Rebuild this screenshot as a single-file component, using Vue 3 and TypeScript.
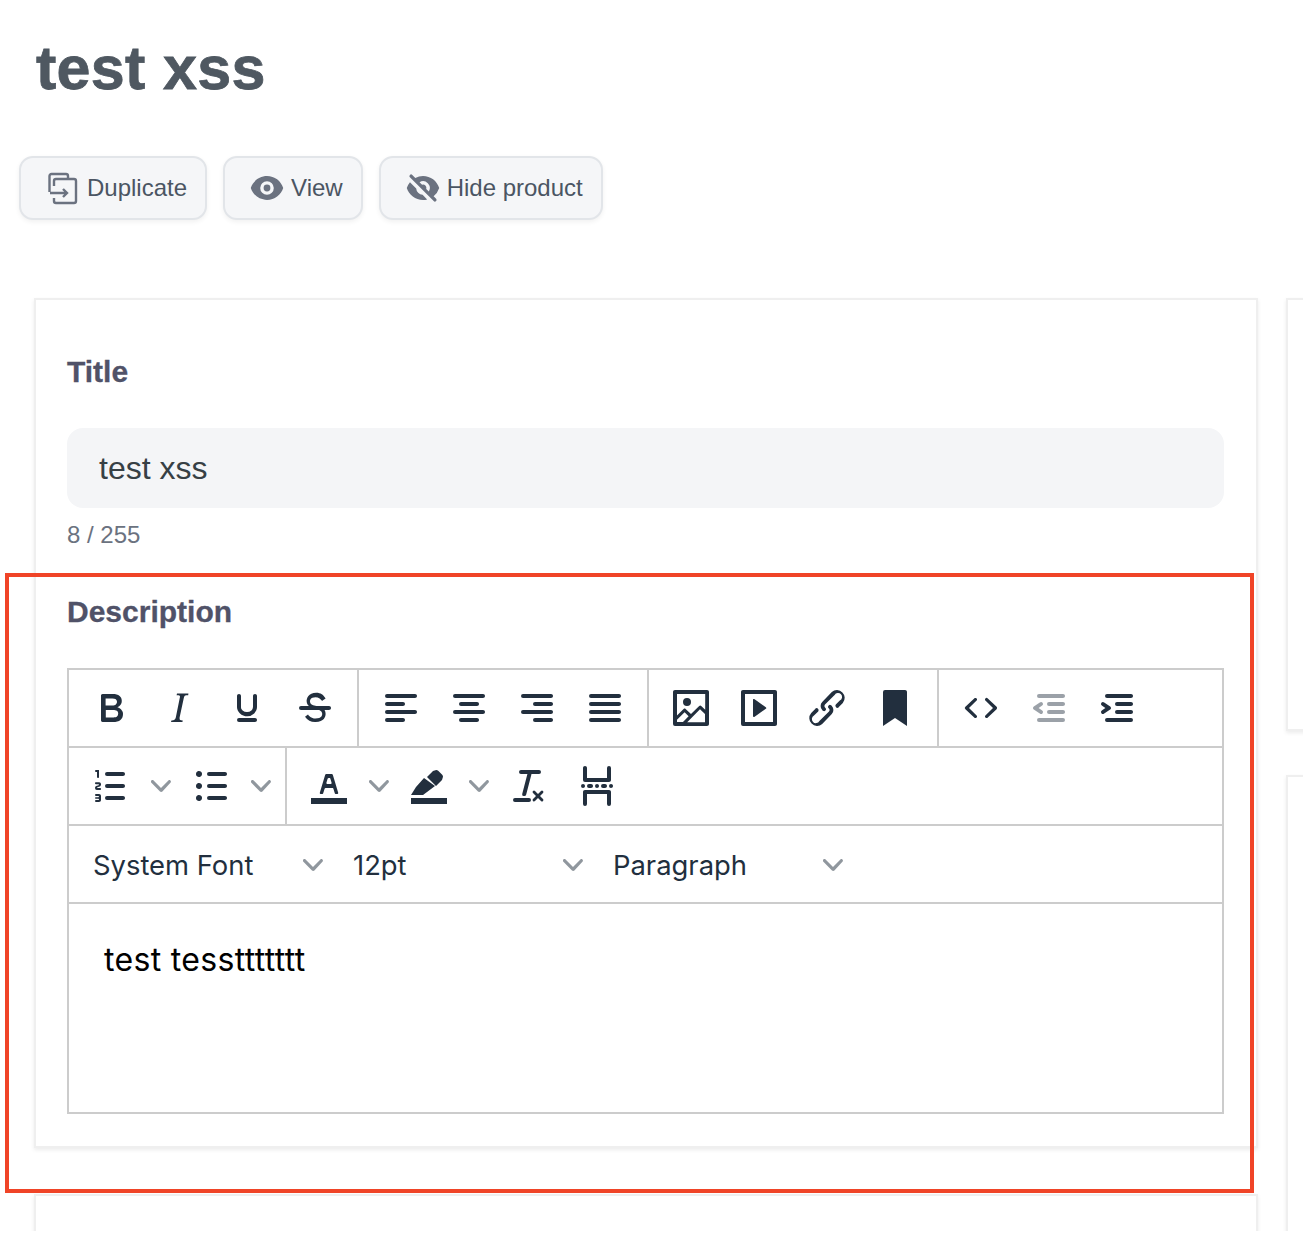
<script setup lang="ts">
import { ref } from 'vue'

// tinymce toolbar icons, all on a 24 unit grid
const icons: Record<string, string> = {
  bold: 'M7.8 19c-.3 0-.5 0-.6-.2l-.2-.5V5.7c0-.2 0-.4.2-.5l.6-.2h5c1.5 0 2.7.3 3.5 1 .7.6 1.1 1.4 1.1 2.5a3 3 0 0 1-.6 1.9c-.4.6-1 1-1.6 1.2.4.1.9.3 1.3.6s.8.7 1 1.2c.4.4.5 1 .5 1.6 0 1.3-.4 2.3-1.3 3-.8.7-2.1 1-3.8 1H7.8zm5-8.3c.6 0 1.2-.1 1.6-.5.4-.3.6-.7.6-1.3 0-1.1-.8-1.7-2.3-1.7H9.3v3.5h3.4zm.5 6c.7 0 1.3-.1 1.7-.4.4-.4.6-.9.6-1.5s-.2-1-.7-1.4c-.4-.3-1-.4-2-.4H9.4v3.8h4z',
  italic: 'M16.7 4.7l-.1.9h-.3c-.6 0-1 0-1.4.3-.3.3-.4.6-.5 1.1l-2.1 9.8v.6c0 .5.4.8 1.4.8h.2l-.2.8H8l.2-.8h.2c1.1 0 1.8-.5 2-1.5l2-9.8.1-.5c0-.6-.4-.8-1.4-.8h-.3l.2-.9h5.8z',
  underline: 'M16 5c.6 0 1 .4 1 1v5.5a4 4 0 0 1-.4 1.8l-1 1.4a5.3 5.3 0 0 1-5.5 1 5 5 0 0 1-1.6-1c-.5-.4-.8-.9-1.1-1.4a4 4 0 0 1-.4-1.8V6c0-.6.4-1 1-1s1 .4 1 1v5.5c0 .3 0 .6.2 1l.6.7a3.3 3.3 0 0 0 2.2.8 3.4 3.4 0 0 0 2.2-.8c.3-.2.4-.5.6-.8l.2-.9V6c0-.6.4-1 1-1zM8 17h8c.6 0 1 .4 1 1s-.4 1-1 1H8a1 1 0 0 1 0-2z',
  strike: 'M15.6 8.5c-.5-.7-1-1.1-1.3-1.3-.6-.4-1.3-.6-2-.6-2.7 0-2.8 1.7-2.8 2.1 0 1.6 1.8 2 3.2 2.3 4.4.9 4.6 2.8 4.6 3.9 0 1.4-.7 4.1-5 4.1A6.2 6.2 0 0 1 7 16.4l1.5-1.1c.4.6 1.6 2 3.7 2 1.6 0 2.5-.4 3-1 .3-.4.4-.9.4-1.3 0-.8-.4-1.9-3.1-2.5-1.3-.3-4.7-1-4.7-4 0-.6.2-1.6.9-2.5.7-.8 2-1.6 3.9-1.6 1.2 0 2 .3 2.8.7.5.3 1.2.9 1.9 2.2l-1.5 1zM5 11h14c.6 0 1 .4 1 1s-.4 1-1 1H5a1 1 0 0 1 0-2z',
  alignLeft: 'M5 5h14c.6 0 1 .4 1 1s-.4 1-1 1H5a1 1 0 1 1 0-2zm0 4h8c.6 0 1 .4 1 1s-.4 1-1 1H5a1 1 0 1 1 0-2zm0 8h8c.6 0 1 .4 1 1s-.4 1-1 1H5a1 1 0 0 1 0-2zm0-4h14c.6 0 1 .4 1 1s-.4 1-1 1H5a1 1 0 0 1 0-2z',
  alignCenter: 'M5 5h14c.6 0 1 .4 1 1s-.4 1-1 1H5a1 1 0 1 1 0-2zm3 4h8c.6 0 1 .4 1 1s-.4 1-1 1H8a1 1 0 1 1 0-2zm0 8h8c.6 0 1 .4 1 1s-.4 1-1 1H8a1 1 0 0 1 0-2zm-3-4h14c.6 0 1 .4 1 1s-.4 1-1 1H5a1 1 0 0 1 0-2z',
  alignRight: 'M5 5h14c.6 0 1 .4 1 1s-.4 1-1 1H5a1 1 0 1 1 0-2zm6 4h8c.6 0 1 .4 1 1s-.4 1-1 1h-8a1 1 0 0 1 0-2zm0 8h8c.6 0 1 .4 1 1s-.4 1-1 1h-8a1 1 0 0 1 0-2zm-6-4h14c.6 0 1 .4 1 1s-.4 1-1 1H5a1 1 0 0 1 0-2z',
  justify: 'M5 5h14c.6 0 1 .4 1 1s-.4 1-1 1H5a1 1 0 1 1 0-2zm0 4h14c.6 0 1 .4 1 1s-.4 1-1 1H5a1 1 0 1 1 0-2zm0 4h14c.6 0 1 .4 1 1s-.4 1-1 1H5a1 1 0 0 1 0-2zm0 4h14c.6 0 1 .4 1 1s-.4 1-1 1H5a1 1 0 0 1 0-2z',
  image: 'M5 15.7l3.3-3.2c.3-.3.7-.3 1 0L12 15l4.1-4c.3-.4.8-.4 1 0l2 1.9V5H5v10.7zM5 18V19h3l2.8-2.9-2-2L5 17.9zm14-3l-2.5-2.4-6.4 6.5H19v-4zM4 3h16c.6 0 1 .4 1 1v16c0 .6-.4 1-1 1H4a1 1 0 0 1-1-1V4c0-.6.4-1 1-1zm6 8a2 2 0 1 0 0-4 2 2 0 0 0 0 4z',
  media: 'M4 3h16c.6 0 1 .4 1 1v16c0 .6-.4 1-1 1H4a1 1 0 0 1-1-1V4c0-.6.4-1 1-1zm1 2v14h14V5H5zm4.8 2.6l5.6 4a.5.5 0 0 1 0 .8l-5.6 4A.5.5 0 0 1 9 16V8a.5.5 0 0 1 .8-.4z',
  link: 'M6.2 12.3a1 1 0 0 1 1.4 1.4l-2.1 2.1a2 2 0 1 0 2.7 2.7l4.8-4.8a1 1 0 0 0 0-1.4 1 1 0 1 1 1.4-1.3 2.9 2.9 0 0 1 0 4L9.6 20a3.9 3.9 0 0 1-5.5-5.5l2-2zm11.6-.6a1 1 0 0 1-1.4-1.4l2-2a2 2 0 1 0-2.6-2.8L11 10.3a1 1 0 0 0 0 1.4A1 1 0 1 1 9.6 13a2.9 2.9 0 0 1 0-4L14.4 4a3.9 3.9 0 0 1 5.5 5.5l-2 2z',
  bookmark: 'M6 4v17l6-4 6 4V4c0-.6-.4-1-1-1H7a1 1 0 0 0-1 1z',
  code: 'M9.8 15.7c.3.3.3.8 0 1-.3.4-.9.4-1.2 0l-4.4-4.1a.8.8 0 0 1 0-1.2l4.4-4.2c.3-.3.9-.3 1.2 0 .3.3.3.8 0 1.1L6 12l3.8 3.7zM14.2 15.7c-.3.3-.3.8 0 1 .4.4.9.4 1.2 0l4.4-4.1c.3-.3.3-.9 0-1.2l-4.4-4.2a.8.8 0 0 0-1.2 0c-.3.3-.3.8 0 1.1L18 12l-3.8 3.7z',
  outdent: 'M7 5h12c.6 0 1 .4 1 1s-.4 1-1 1H7a1 1 0 1 1 0-2zm5 4h7c.6 0 1 .4 1 1s-.4 1-1 1h-7a1 1 0 0 1 0-2zm0 4h7c.6 0 1 .4 1 1s-.4 1-1 1h-7a1 1 0 0 1 0-2zm-5 4h12a1 1 0 0 1 0 2H7a1 1 0 0 1 0-2zm1.6-3.8a1 1 0 0 1-1.2 1.6l-3-2a1 1 0 0 1 0-1.6l3-2a1 1 0 0 1 1.2 1.6L6.8 12l1.8 1.2z',
  indent: 'M7 5h12c.6 0 1 .4 1 1s-.4 1-1 1H7a1 1 0 1 1 0-2zm5 4h7c.6 0 1 .4 1 1s-.4 1-1 1h-7a1 1 0 0 1 0-2zm0 4h7c.6 0 1 .4 1 1s-.4 1-1 1h-7a1 1 0 0 1 0-2zm-5 4h12a1 1 0 0 1 0 2H7a1 1 0 0 1 0-2zm-2.6-3.8L6.2 12l-1.8-1.2a1 1 0 0 1 1.2-1.6l3 2a1 1 0 0 1 0 1.6l-3 2a1 1 0 1 1-1.2-1.6z',
  numList: 'M10 17h8c.6 0 1 .4 1 1s-.4 1-1 1h-8a1 1 0 0 1 0-2zm0-6h8c.6 0 1 .4 1 1s-.4 1-1 1h-8a1 1 0 0 1 0-2zm0-6h8c.6 0 1 .4 1 1s-.4 1-1 1h-8a1 1 0 1 1 0-2zM6 4v3.5c0 .3-.2.5-.5.5a.5.5 0 0 1-.5-.5V5h-.5a.5.5 0 0 1 0-1H6zm-1 8.8l.2.2h1.3c.3 0 .5.2.5.5s-.2.5-.5.5H4.9a1 1 0 0 1-.9-1V13c0-.4.3-.8.6-1l1.2-.4.2-.3a.2.2 0 0 0-.2-.2H4.5a.5.5 0 0 1-.5-.5c0-.3.2-.5.5-.5h1.6c.5 0 .9.4.9 1v.1c0 .4-.3.8-.6 1l-1.2.4-.2.3zM7 17v2c0 .6-.4 1-1 1H4.5a.5.5 0 0 1 0-1h1.2c.2 0 .3-.1.3-.3 0-.2-.1-.3-.3-.3H4.4a.4.4 0 1 1 0-.8h1.3c.2 0 .3-.1.3-.3 0-.2-.1-.3-.3-.3H4.5a.5.5 0 1 1 0-1H6c.6 0 1 .4 1 1v.6z',
  bullList: 'M11 5h8c.6 0 1 .4 1 1s-.4 1-1 1h-8a1 1 0 0 1 0-2zm0 6h8c.6 0 1 .4 1 1s-.4 1-1 1h-8a1 1 0 0 1 0-2zm0 6h8c.6 0 1 .4 1 1s-.4 1-1 1h-8a1 1 0 0 1 0-2zM4.5 6c0-.4.1-.8.4-1 .3-.4.7-.5 1.1-.5s.8.1 1 .4c.4.3.5.7.5 1.1s-.1.8-.4 1c-.3.4-.7.5-1.1.5s-.8-.1-1-.4c-.4-.3-.5-.7-.5-1.1zm0 6c0-.4.1-.8.4-1 .3-.4.7-.5 1.1-.5s.8.1 1 .4c.4.3.5.7.5 1.1s-.1.8-.4 1c-.3.4-.7.5-1.1.5s-.8-.1-1-.4c-.4-.3-.5-.7-.5-1.1zm0 6c0-.4.1-.8.4-1 .3-.4.7-.5 1.1-.5s.8.1 1 .4c.4.3.5.7.5 1.1s-.1.8-.4 1c-.3.4-.7.5-1.1.5s-.8-.1-1-.4c-.4-.3-.5-.7-.5-1.1z',
  textColor: 'M3 18h18v3H3zM8.7 16h-.8a.5.5 0 0 1-.5-.6l2.7-9c.1-.3.3-.4.5-.4h2.8c.2 0 .4.1.5.4l2.7 9a.5.5 0 0 1-.5.6h-.8a.5.5 0 0 1-.4-.4l-.7-2.2c0-.3-.3-.4-.5-.4h-3.4c-.2 0-.4.1-.5.4l-.7 2.2c0 .3-.2.4-.4.4zm2.6-7.6l-.6 2a.5.5 0 0 0 .5.6h1.6a.5.5 0 0 0 .5-.6l-.6-2c0-.3-.3-.4-.5-.4h-.4c-.2 0-.4.1-.5.4z',
  highlight: 'M3 18h18v3H3zM14 4.5l1.6-.5c.4 0 .7.1 1 .4l2 2c.3.3.4.6.4 1l-.5 1.6-3 3-4.5-4.5zM9.5 8l5.5 4-6 4.5H3l2.5-4z',
  clearFormat: 'M13.2 6a1 1 0 0 1 0 .2l-2.6 10a1 1 0 0 1-1 .8h-.2a.8.8 0 0 1-.8-1l2.6-10H8a1 1 0 1 1 0-2h9a1 1 0 0 1 0 2h-3.8zM5 18h7a1 1 0 0 1 0 2H5a1 1 0 0 1 0-2zm13 1.5L16.5 18 15 19.5a.7.7 0 0 1-1-1l1.5-1.5-1.5-1.5a.7.7 0 0 1 1-1l1.5 1.5 1.5-1.5a.7.7 0 0 1 1 1L17.5 17l1.5 1.5a.7.7 0 0 1-1 1z',
  pageBreak: 'M5 11c.6 0 1 .4 1 1s-.4 1-1 1a1 1 0 0 1 0-2zm3 0h1c.6 0 1 .4 1 1s-.4 1-1 1H8a1 1 0 0 1 0-2zm4 0c.6 0 1 .4 1 1s-.4 1-1 1a1 1 0 0 1 0-2zm3 0h1c.6 0 1 .4 1 1s-.4 1-1 1h-1a1 1 0 0 1 0-2zm4 0c.6 0 1 .4 1 1s-.4 1-1 1a1 1 0 0 1 0-2zM6 2c.6 0 1 .4 1 1v5h10V3a1 1 0 0 1 2 0v6c0 .6-.4 1-1 1H6a1 1 0 0 1-1-1V3c0-.6.4-1 1-1zm0 12h12c.6 0 1 .4 1 1v6a1 1 0 0 1-2 0v-5H7v5a1 1 0 0 1-2 0v-6c0-.6.4-1 1-1z',
}

const chevron = 'M8.7 2.2c.3-.3.8-.3 1 0 .4.4.4.9 0 1.2L5.7 7.8c-.3.3-.9.3-1.2 0L.2 3.4a.8.8 0 0 1 0-1.2c.3-.3.8-.3 1.1 0L5 6l3.7-3.8z'

interface ToolButton {
  icon: string
  split?: boolean
  disabled?: boolean
}

const firstRow: ToolButton[][] = [
  [{ icon: 'bold' }, { icon: 'italic' }, { icon: 'underline' }, { icon: 'strike' }],
  [{ icon: 'alignLeft' }, { icon: 'alignCenter' }, { icon: 'alignRight' }, { icon: 'justify' }],
  [{ icon: 'image' }, { icon: 'media' }, { icon: 'link' }, { icon: 'bookmark' }],
  [{ icon: 'code' }, { icon: 'outdent', disabled: true }, { icon: 'indent' }],
]

const secondRow: ToolButton[][] = [
  [{ icon: 'numList', split: true }, { icon: 'bullList', split: true }],
  [{ icon: 'textColor', split: true }, { icon: 'highlight', split: true }, { icon: 'clearFormat' }, { icon: 'pageBreak' }],
]

const rows = [firstRow, secondRow]
const selects = ['System Font', '12pt', 'Paragraph']

const title = ref('test xss')
</script>

<template>
  <div class="page">
    <h1 class="page-title">{{ title }}</h1>

    <div class="actions">
      <button class="action" type="button">
        <svg class="action-icon" viewBox="0 0 34 34" fill="none" stroke="currentColor" stroke-width="2.4">
          <path d="M3.5 21V5a2 2 0 0 1 2-2H20a2 2 0 0 1 2 2v3" />
          <path d="M8 15v-5a2 2 0 0 1 2-2h18a2 2 0 0 1 2 2v20a2 2 0 0 1-2 2H10a2 2 0 0 1-2-2v-3" />
          <path d="M4 22h17M17 18l4 4-4 4" />
        </svg>
        Duplicate
      </button>
      <button class="action" type="button">
        <svg class="action-icon" viewBox="0 0 20 20" fill="currentColor">
          <path d="M10 12a2 2 0 100-4 2 2 0 000 4z" />
          <path fill-rule="evenodd" clip-rule="evenodd" d="M.458 10C1.732 5.943 5.522 3 10 3s8.268 2.943 9.542 7c-1.274 4.057-5.064 7-9.542 7S1.732 14.057.458 10zM14 10a4 4 0 11-8 0 4 4 0 018 0z" />
        </svg>
        View
      </button>
      <button class="action" type="button">
        <svg class="action-icon" viewBox="0 0 20 20" fill="currentColor">
          <path fill-rule="evenodd" clip-rule="evenodd" d="M3.707 2.293a1 1 0 00-1.414 1.414l14 14a1 1 0 001.414-1.414l-1.473-1.473A10.014 10.014 0 0019.542 10C18.268 5.943 14.478 3 10 3a9.958 9.958 0 00-4.512 1.074l-1.78-1.781zm4.261 4.26l1.514 1.515a2.003 2.003 0 012.45 2.45l1.514 1.514a4 4 0 00-5.478-5.478z" />
          <path d="M12.454 16.697L9.75 13.992a4 4 0 01-3.742-3.741L2.335 6.578A9.98 9.98 0 00.458 10c1.274 4.057 5.065 7 9.542 7 .847 0 1.669-.105 2.454-.303z" />
        </svg>
        Hide product
      </button>
    </div>

    <div class="layout">
      <div class="main-col">
        <section class="card">
          <label class="field-label">Title</label>
          <div class="title-input">{{ title }}</div>
          <div class="counter">8 / 255</div>

          <label class="field-label description-label">Description</label>
          <div class="editor">
            <div v-for="(row, r) in rows" :key="r" class="toolbar-row">
              <div v-for="(group, g) in row" :key="g" class="tool-group">
                <template v-for="btn in group" :key="btn.icon">
                  <span :class="['tool-btn', { disabled: btn.disabled }]">
                    <svg viewBox="0 0 24 24" width="48" height="48"><path :d="icons[btn.icon]" /></svg>
                  </span>
                  <span v-if="btn.split" class="tool-chevron">
                    <svg viewBox="0 0 10 10" width="20" height="20"><path :d="chevron" /></svg>
                  </span>
                </template>
              </div>
            </div>
            <div class="toolbar-row select-row">
              <span v-for="name in selects" :key="name" class="tool-select">
                {{ name }}
                <svg viewBox="0 0 10 10" width="20" height="20"><path :d="chevron" /></svg>
              </span>
            </div>
            <div class="editor-body">test tessttttttt</div>
          </div>
        </section>
        <section class="card card-next"></section>
      </div>

      <div class="side-col">
        <section class="card side-first"></section>
        <section class="card side-second"></section>
      </div>
    </div>

    <!-- red annotation box from the screenshot -->
    <div class="highlight-box"></div>
  </div>
</template>

<style scoped>
.page {
  position: relative;
  width: 1303px;
  height: 1231px;
  overflow: hidden;
  background: #fff;
  font-family: "Liberation Sans", Arial, sans-serif;
}

.page-title {
  margin: 0;
  padding: 32px 0 0 36px;
  height: 72px;
  font-size: 61px;
  line-height: 72px;
  font-weight: 700;
  letter-spacing: 0.3px;
  -webkit-text-stroke: 0.8px #4f5861;
  color: #4f5861;
}

.actions {
  display: flex;
  gap: 16px;
  margin: 52px 0 0 19px;
}

.action {
  display: flex;
  align-items: center;
  gap: 7px;
  height: 64px;
  padding: 0 18px 0 25px;
  background: #f5f6f8;
  border: 2px solid #e2e5e9;
  border-radius: 14px;
  box-shadow: 0 2px 5px rgba(0, 0, 0, 0.06);
  font-family: inherit;
  font-size: 24px;
  color: #4b5563;
}

.action-icon {
  width: 34px;
  height: 34px;
  color: #6b7280;
}

.layout {
  display: grid;
  grid-template-columns: 1224px 400px;
  gap: 28px;
  margin: 78px 0 0 34px;
}

.card {
  box-sizing: border-box;
  background: #fff;
  border: 2px solid #efefef;
  box-shadow: 0 2px 4px rgba(0, 0, 0, 0.08);
}

.main-col .card:first-child {
  padding: 52px 32px 32px 31px;
}

.card-next {
  margin-top: 46px;
  height: 300px;
}

.side-first {
  height: 433px;
}

.side-second {
  margin-top: 44px;
  height: 600px;
}

.field-label {
  display: block;
  font-size: 30px;
  line-height: 40px;
  font-weight: 700;
  -webkit-text-stroke: 0.3px #505268;
  color: #505268;
}

.title-input {
  margin-top: 36px;
  height: 80px;
  padding-left: 32px;
  background: #f4f5f7;
  border-radius: 16px;
  font-size: 32px;
  line-height: 80px;
  color: #374045;
}

.counter {
  margin-top: 11px;
  font-size: 24px;
  line-height: 32px;
  color: #6b7280;
}

.description-label {
  margin: 41px 0 36px;
}

.editor {
  border: 2px solid #ccc;
  font-family: Inter, "Liberation Sans", sans-serif;
}

.toolbar-row {
  display: flex;
  height: 76px;
  border-bottom: 2px solid #ccc;
}

.tool-group {
  display: flex;
  align-items: center;
  padding: 0 8px;
  border-right: 2px solid #ccc;
}

.tool-group:last-child {
  border-right: 0;
}

.tool-btn {
  display: flex;
  justify-content: center;
  align-items: center;
  width: 68px;
  height: 68px;
}

.tool-btn svg {
  fill: #222f3e;
}

.tool-btn.disabled svg {
  fill: rgba(34, 47, 62, 0.45);
}

.tool-chevron {
  display: flex;
  justify-content: center;
  align-items: center;
  width: 32px;
  height: 68px;
}

.tool-chevron svg,
.tool-select svg {
  fill: rgba(34, 47, 62, 0.5);
}

.select-row {
  align-items: center;
  padding-left: 8px;
}

.tool-select {
  box-sizing: border-box;
  display: flex;
  justify-content: space-between;
  align-items: center;
  width: 260px;
  padding: 2px 14px 0 16px;
  font-size: 27.4px;
  color: #222f3e;
}

.editor-body {
  height: 208px;
  box-sizing: border-box;
  padding: 34px 35px 0;
  font-size: 32px;
  line-height: 44px;
  letter-spacing: 0.33px;
  color: #000;
}

.highlight-box {
  position: absolute;
  left: 5px;
  top: 573px;
  width: 1249px;
  height: 620px;
  box-sizing: border-box;
  border: 4px solid #f04427;
}
</style>

<style>
html,
body {
  background: #fff;
}
</style>
